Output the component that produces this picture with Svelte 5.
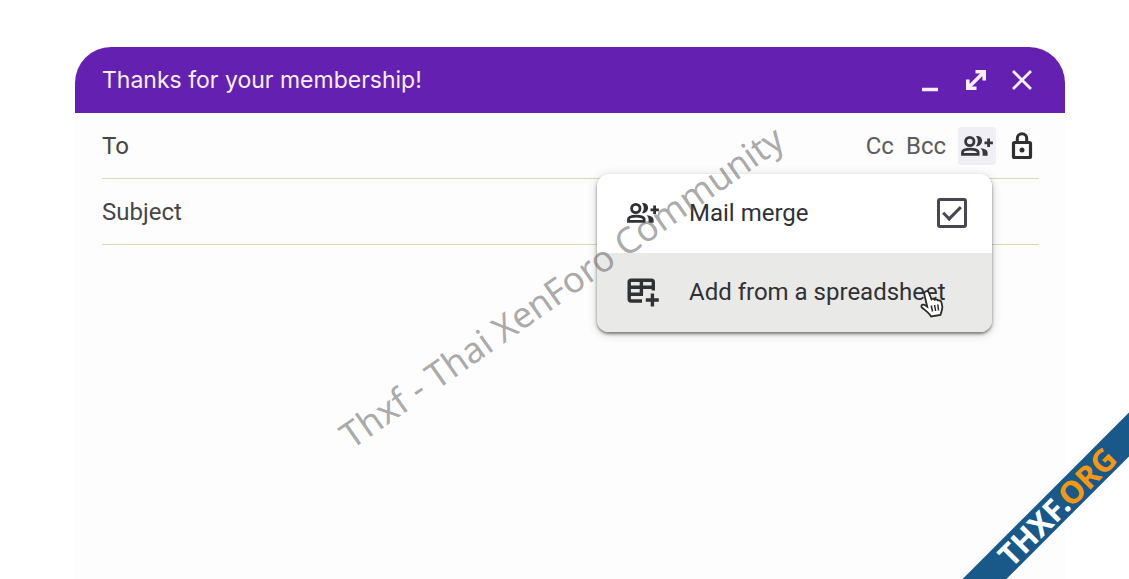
<script>
  let to = $state('');
  let subject = $state('');
  let body = $state('');
  let mailMerge = $state(true);
</script>

{#snippet people()}
  <svg class="people" viewBox="0 0 32 22" aria-hidden="true">
    <circle cx="8.800" cy="6.500" r="4.200" fill="none" stroke="currentColor" stroke-width="2.800" />
    <path d="M15 1.200c4.200-1.400 6.600 2 6 5.400-.5 3.400-3.200 5.200-6 4.400 2.400-3 2.400-6.800 0-9.800z" fill="currentColor" />
    <path d="M1.500 19.400v-2.200c0-4.200 15.600-4.200 15.600 0v2.200z" fill="none" stroke="currentColor" stroke-width="2.800" />
    <path d="M19.600 13.200c4.400.4 7 2 7 4.600v3h-5v-3.400c0-1.600-.8-3-2-4.200z" fill="currentColor" />
    <path d="M27.600 3.600v8.400M23.500 7.800h8.400" fill="none" stroke="currentColor" stroke-width="2.800" />
  </svg>
{/snippet}

<div class="page">
  <section class="compose">
    <header class="bar">
      <h1>Thanks for your membership!</h1>
      <div class="window-actions">
        <button aria-label="Minimize">
          <svg viewBox="0 0 24 24"><path d="M4 21.500h16" stroke="currentColor" stroke-width="3.500" /></svg>
        </button>
        <button aria-label="Full screen">
          <svg viewBox="0 0 24 24" fill="none" stroke="currentColor" stroke-width="3.600">
            <path d="M4.500 19.500l15-15M11.500 3.800h8.700v8.700M3.800 11.500v8.700h8.700" />
          </svg>
        </button>
        <button aria-label="Close">
          <svg viewBox="0 0 24 24"><path d="M3 3l18 18M21 3L3 21" stroke="currentColor" stroke-width="2.800" /></svg>
        </button>
      </div>
    </header>

    <div class="fields">
      <div class="row">
        <label for="to">To</label>
        <input id="to" type="text" bind:value={to} />
        <div class="recipients">
          <button class="cc">Cc</button>
          <button class="cc">Bcc</button>
          <div class="merge">
            <button class="merge-btn" aria-label="Toggle mail merge">{@render people()}</button>
            <div class="menu">
              <label class="item">
                <span class="icon">{@render people()}</span>
                <span>Mail merge</span>
                <input type="checkbox" bind:checked={mailMerge} />
              </label>
              <button class="item active">
                <span class="icon">
                  <svg class="sheet" viewBox="0 0 32 29" fill="none" stroke="currentColor" stroke-width="3.400">
                    <path d="M15 23H4q-1.800 0-1.800-1.800V4Q2.200 2.200 4 2.200h20.500q1.800 0 1.800 1.800v8.500M2 9.200h24.300M2 16.300h14M14.400 2.200v14.300M25.400 15.500v13M18.800 22h13" />
                  </svg>
                </span>
                <span>Add from a spreadsheet</span>
                <svg class="pointer" viewBox="0 0 25 29" aria-hidden="true">
                  <path d="M6.500 2.500c1.600-1 3 0 3.600 1.600l2.400 6.200c1.200-1 2.600-.6 3.200.4 1.200-.8 2.600-.3 3.200.8 1.600-.6 3 .2 3.600 2 .8 2.400 1.200 5 .4 7.600L21.500 26l-9.400 1.500c-2-3.400-5.200-5.600-9-8.800-1.600-1.400-.4-3.600 1.600-3 1.200.3 2.400 1.200 3.500 2L5.300 5.300c-.4-1.200.2-2.200 1.200-2.800z" fill="#fff" stroke="#2b2b2b" stroke-width="1.800" />
                  <path d="M12.300 16.500l1.200 6M15.600 16l1 6M18.800 15.500l.8 6" stroke="#2b2b2b" stroke-width="1.500" />
                </svg>
              </button>
            </div>
          </div>
          <button class="lock" aria-label="Confidential mode">
            <svg viewBox="0 0 22 28">
              <rect x="2.500" y="10.500" width="17" height="15" rx="1" fill="none" stroke="currentColor" stroke-width="3.200" />
              <path d="M6.300 10V6.500a4.700 4.700 0 0 1 9.400 0V10" fill="none" stroke="currentColor" stroke-width="3" />
              <circle cx="11" cy="18" r="2.500" fill="currentColor" />
            </svg>
          </button>
        </div>
      </div>
      <div class="row">
        <label for="subject">Subject</label>
        <input id="subject" type="text" bind:value={subject} />
      </div>
      <textarea aria-label="Message body" bind:value={body}></textarea>
    </div>
  </section>

  <div class="watermark"><span>Thxf - Thai XenForo Community</span></div>
  <div class="corner">
    <div class="ribbon">THXF.<em>ORG</em></div>
  </div>
</div>

<style>
  :global(body) { background: #fff; }
  .page {
    position: relative;
    min-height: 100vh;
    box-sizing: border-box;
    padding: 47px 64px 0 75px;
    display: flex; flex-direction: column;
    overflow: hidden;
    font-family: Roboto, "Liberation Sans", sans-serif;
    font-size: 24px; line-height: 32px;
    color: #45464a;
  }
  button {
    display: flex; align-items: center;
    padding: 0; border: none; background: none;
    font: inherit; color: inherit; cursor: pointer;
  }
  .compose {
    flex: 1;
    display: flex; flex-direction: column;
    background: #fdfdfd;
    border-radius: 36px 36px 0 0;
  }
  .bar {
    display: flex; align-items: center; justify-content: space-between;
    height: 66px;
    padding: 0 31px 0 27px;
    background: #6420b1; color: #f7effd;
    border-radius: 36px 36px 0 0;
  }
  h1 {
    margin: 0;
    font-family: Inter, Roboto, sans-serif;
    font-size: 23px; font-weight: 400;
  }
  .window-actions { display: flex; gap: 22px; }
  .window-actions svg { width: 24px; height: 24px; display: block; }
  .fields {
    flex: 1;
    display: flex; flex-direction: column;
    padding: 0 26px 0 27px;
  }
  .row {
    display: flex; align-items: center;
    height: 65px;
    border-bottom: 1px solid #d5dbb6;
  }
  .row input[type="text"] {
    flex: 1; min-width: 0;
    margin-left: 12px; padding: 0;
    border: none; outline: none; background: none;
    font: inherit;
  }
  .recipients { display: flex; align-items: center; gap: 12px; color: #5b5b60; }
  .merge { position: relative; color: #37383c; }
  .merge-btn {
    justify-content: center;
    width: 38px; height: 38px;
    background: #f0eff5;
    border-radius: 3px;
  }
  .people { width: 32px; height: 22px; display: block; }
  .lock { margin: 0 6px 0 3px; color: #303033; }
  .lock svg { width: 22px; height: 28px; display: block; }
  .menu {
    position: absolute; top: 47px; right: 4px; z-index: 2;
    width: 395px;
    background: #fff;
    border-radius: 12px;
    overflow: hidden;
    box-shadow: 0 2px 3px rgba(60,64,50,0.6), 0 2px 10px rgba(60,64,67,0.25);
  }
  .item {
    display: flex; align-items: center;
    box-sizing: border-box;
    width: 100%; height: 79px;
    padding: 0 25px 0 30px;
    text-align: left; white-space: nowrap;
    color: #303134;
    cursor: pointer;
  }
  .item.active { background: #e9e9e7; }
  .icon { width: 62px; flex: none; }
  .sheet { width: 32px; height: 29px; display: block; }
  .item input {
    appearance: none;
    width: 30px; height: 30px;
    margin: 0 0 0 auto;
    border: 3px solid #47484f;
    border-radius: 3px;
    display: grid; place-items: center;
  }
  .item input:checked::before {
    content: '';
    width: 15px; height: 7px;
    margin-bottom: 5px;
    border: solid #47484f; border-width: 0 0 3px 3px;
    transform: rotate(-45deg);
  }
  .pointer {
    position: absolute; right: 48px; bottom: 14px;
    width: 25px; height: 29px;
  }
  textarea {
    flex: 1;
    padding: 16px 0;
    border: none; outline: none; resize: none;
    background: none;
    font: inherit;
  }
  .watermark {
    position: absolute; inset: 0; z-index: 3;
    display: flex; align-items: center; justify-content: center;
    padding: 0 6px 6px 0;
    pointer-events: none;
    font-family: "Noto Sans", "Open Sans", sans-serif;
    font-size: 36px;
    color: rgba(90,90,90,0.52);
  }
  .watermark span { transform: rotate(-35deg); white-space: nowrap; }
  .corner {
    position: absolute; right: 0; bottom: 0; z-index: 4;
    width: 168px; height: 168px;
    overflow: hidden;
    pointer-events: none;
  }
  .ribbon {
    position: absolute; right: -78px; bottom: 57px;
    width: 300px; height: 31px;
    line-height: 30px; text-align: center;
    background: #18598a; color: #fff;
    font-family: "Noto Sans", "Open Sans", sans-serif;
    font-size: 31px; font-weight: 700;
    transform: rotate(-45deg);
  }
  .ribbon em { font-style: normal; color: #f7970f; }
</style>
